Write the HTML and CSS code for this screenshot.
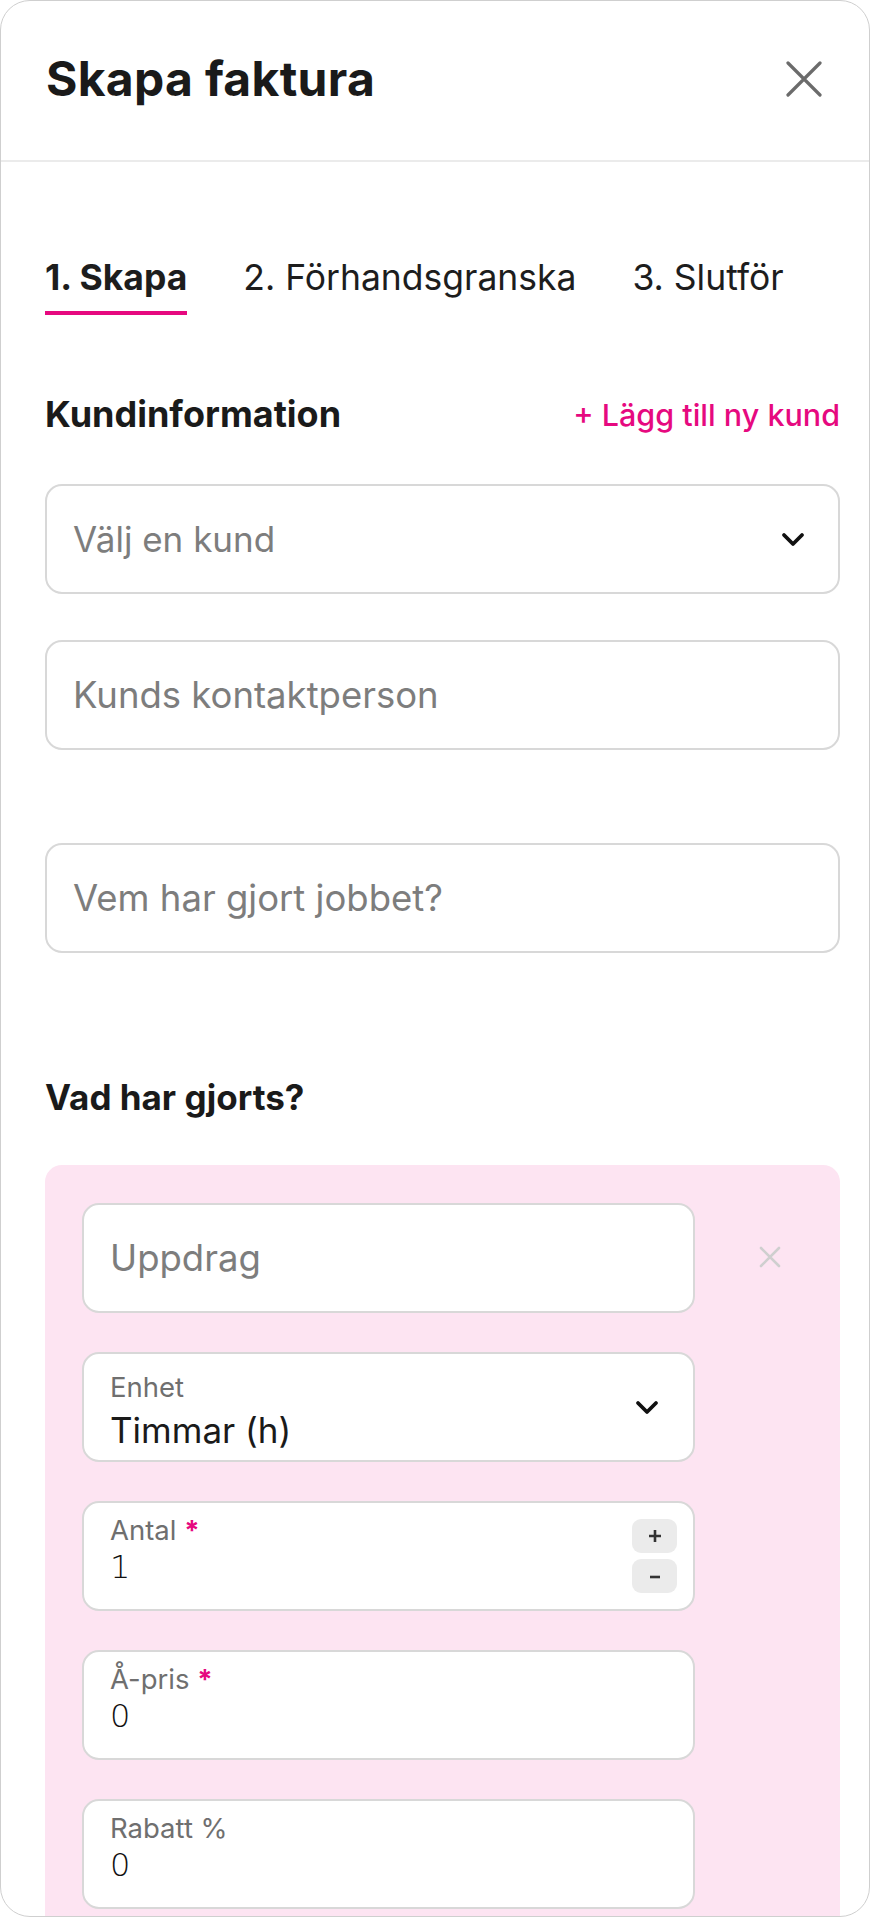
FILE: index.html
```html
<!DOCTYPE html>
<html>
<head>
    <title>Skapa faktura</title>
    <link rel="stylesheet" href="styles.css">
</head>
<body>
    <div class="modal">
        <div class="header">
            <h1>Skapa faktura</h1>
            <button class="close" aria-label="Stäng">
                <svg width="36" height="36" viewBox="0 0 36 36"><path d="M2 2 L34 34 M34 2 L2 34" stroke="#6b6b6b" stroke-width="3.2" stroke-linecap="round"/></svg>
            </button>
        </div>

        <div class="content">
            <div class="tabs">
                <div class="tab active">1. Skapa</div>
                <div class="tab">2. Förhandsgranska</div>
                <div class="tab">3. Slutför</div>
            </div>

            <div class="section-head">
                <h2>Kundinformation</h2>
                <a class="add-link" href="#">+ Lägg till ny kund</a>
            </div>

            <div class="field select">
                <span class="placeholder">Välj en kund</span>
                <svg class="chevron" width="24" height="15" viewBox="0 0 24 15"><path d="M3 3 L12 12 L21 3" fill="none" stroke="#111" stroke-width="3.8" stroke-linecap="round" stroke-linejoin="round"/></svg>
            </div>
            <input class="field input contact" type="text" placeholder="Kunds kontaktperson">
            <input class="field input worker" type="text" placeholder="Vem har gjort jobbet?">

            <h2 class="done-title">Vad har gjorts?</h2>

            <div class="item">
                <div class="item-fields">
                    <input class="field input" type="text" placeholder="Uppdrag">

                    <div class="field select labeled unit">
                        <div class="stack">
                            <span class="label">Enhet</span>
                            <span class="value">Timmar (h)</span>
                        </div>
                        <svg class="chevron" width="24" height="15" viewBox="0 0 24 15"><path d="M3 3 L12 12 L21 3" fill="none" stroke="#111" stroke-width="3.8" stroke-linecap="round" stroke-linejoin="round"/></svg>
                    </div>

                    <div class="field labeled">
                        <div class="stack">
                            <span class="label">Antal <em>*</em></span>
                            <span class="value num">1</span>
                        </div>
                        <div class="stepper">
                            <button>
                                <svg width="16" height="16" viewBox="0 0 16 16"><path d="M8 2 V14 M2 8 H14" stroke="#333" stroke-width="2.6"/></svg>
                            </button>
                            <button>
                                <svg width="16" height="16" viewBox="0 0 16 16"><path d="M3 9 H13" stroke="#333" stroke-width="2.6"/></svg>
                            </button>
                        </div>
                    </div>

                    <div class="field labeled">
                        <div class="stack">
                            <span class="label">Å-pris <em>*</em></span>
                            <span class="value num">0</span>
                        </div>
                    </div>

                    <div class="field labeled">
                        <div class="stack">
                            <span class="label">Rabatt %</span>
                            <span class="value num">0</span>
                        </div>
                    </div>
                </div>
                <button class="remove" aria-label="Ta bort">
                    <svg width="22" height="22" viewBox="0 0 22 22"><path d="M2 2 L20 20 M20 2 L2 20" stroke="#cfcfcf" stroke-width="2.6" stroke-linecap="round"/></svg>
                </button>
            </div>
        </div>
    </div>
</body>
</html>
```

FILE: styles.css
```css
* { box-sizing: border-box; }
body { margin: 0; background: #fff; font-family: Inter, "Noto Sans", sans-serif; color: #1a1a1a; }
button { border: none; background: none; padding: 0; cursor: pointer; font: inherit; }

.modal { width: 870px; height: 1917px; overflow: hidden; border: 1px solid #cfcfcf; border-radius: 30px; background: #fff; }

.header { height: 161px; display: flex; align-items: center; justify-content: space-between; padding: 0 47px 4px 45px; border-bottom: 2px solid #ebebeb; }
.header h1 { margin: 0; font-size: 48px; font-weight: 700; letter-spacing: 0.3px; }
.close { width: 36px; height: 36px; display: flex; }

.content { padding: 0 29px 0 44px; }

.tabs { display: flex; gap: 56px; margin-top: 95px; }
.tab { font-size: 35.5px; line-height: 42px; padding-bottom: 12px; border-bottom: 4px solid transparent; color: #1d1d1d; }
.tab.active { font-weight: 700; border-bottom-color: #e6097f; }

.section-head { display: flex; justify-content: space-between; align-items: center; margin-top: 77px; height: 44px; }
h2 { margin: 0; font-size: 36px; font-weight: 700; }
.add-link { color: #e6097f; font-size: 30.5px; font-weight: 500; text-decoration: none; }

.field { display: flex; align-items: center; width: 100%; height: 110px; background: #fff; border: 2px solid #d8d8d8; border-radius: 17px; padding: 0 33px 0 26px; font-family: inherit; font-size: 36.5px; color: #1a1a1a; }
.field.select { justify-content: space-between; margin-top: 48px; }
.placeholder { color: #7d7d7d; font-size: 35px; }
.input { outline: none; }
.input::placeholder { color: #7d7d7d; }
.contact { margin-top: 46px; }
.worker { margin-top: 93px; }

.done-title { margin-top: 122px; line-height: 44px; font-size: 35px; }

.item { display: flex; align-items: flex-start; margin-top: 46px; background: #fde4f2; border-radius: 17px; padding: 38px 0 60px 37px; }
.item-fields { width: 613px; display: flex; flex-direction: column; gap: 39px; }
.item .field { margin-top: 0; }
.remove { width: 22px; height: 22px; margin: 43px 0 0 64px; display: flex; }

.labeled { justify-content: space-between; padding-right: 16px; }
.stack { display: flex; flex-direction: column; align-self: flex-start; padding-top: 11px; }
.unit .stack { padding-top: 17px; }
.label { font-size: 27.5px; line-height: 32px; color: #6f6f6f; }
.label em { font-style: normal; color: #e6097f; font-weight: 700; }
.value { font-size: 35px; line-height: 42px; margin-top: 6px; }
.num { font-family: "DejaVu Sans", sans-serif; font-weight: 300; font-size: 32px; color: #111; margin-top: 0; }
.unit { padding-right: 34px; }

.stepper { display: flex; flex-direction: column; gap: 6px; }
.stepper button { width: 45px; height: 34px; background: #ebebeb; border-radius: 9px; display: flex; align-items: center; justify-content: center; }
```
